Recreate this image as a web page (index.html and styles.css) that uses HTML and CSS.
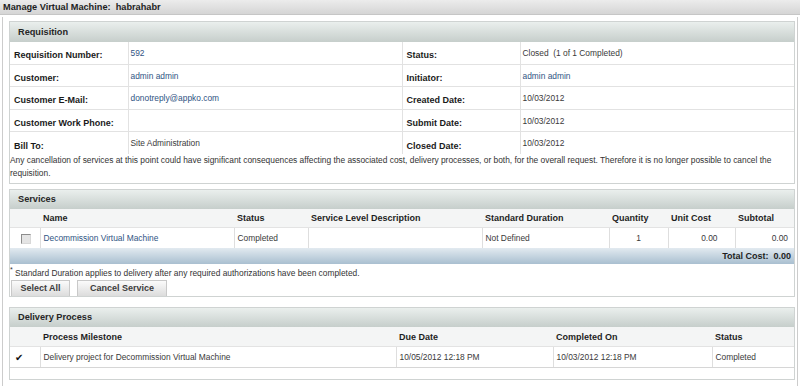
FILE: index.html
```html
<!DOCTYPE html>
<html lang="en">
<head>
    <meta charset="UTF-8">
    <title>Manage Virtual Machine</title>
    <link rel="stylesheet" href="styles.css">
</head>
<body>
    <div class="titlebar">Manage Virtual Machine:&nbsp; habrahabr</div>

    <div class="page">
        <!-- Requisition -->
        <div class="section requisition">
            <div class="section-head">Requisition</div>
            <table class="details">
                <colgroup>
                    <col class="c-label"><col class="c-value"><col class="c-label"><col>
                </colgroup>
                <tr>
                    <th>Requisition Number:</th><td><a href="#">592</a></td>
                    <th>Status:</th><td>Closed &nbsp;(1 of 1 Completed)</td>
                </tr>
                <tr>
                    <th>Customer:</th><td><a href="#">admin admin</a></td>
                    <th>Initiator:</th><td><a href="#">admin admin</a></td>
                </tr>
                <tr>
                    <th>Customer E-Mail:</th><td><a href="#">donotreply@appko.com</a></td>
                    <th>Created Date:</th><td>10/03/2012</td>
                </tr>
                <tr>
                    <th>Customer Work Phone:</th><td></td>
                    <th>Submit Date:</th><td>10/03/2012</td>
                </tr>
                <tr>
                    <th>Bill To:</th><td>Site Administration</td>
                    <th>Closed Date:</th><td>10/03/2012</td>
                </tr>
            </table>
            <p class="warning">Any cancellation of services at this point could have significant consequences affecting the associated cost, delivery processes, or both, for the overall request. Therefore it is no longer possible to cancel the requisition.</p>
        </div>

        <!-- Services -->
        <div class="section services">
            <div class="section-head">Services</div>
            <table class="grid">
                <colgroup>
                    <col class="s-check"><col class="s-name"><col class="s-status"><col class="s-sld">
                    <col class="s-dur"><col class="s-qty"><col class="s-unit"><col>
                </colgroup>
                <tr class="head">
                    <th></th><th>Name</th><th>Status</th><th>Service Level Description</th>
                    <th>Standard Duration</th><th>Quantity</th><th>Unit Cost</th><th>Subtotal</th>
                </tr>
                <tr class="row">
                    <td class="check"><span class="checkbox"></span></td>
                    <td><a href="#">Decommission Virtual Machine</a></td>
                    <td>Completed</td>
                    <td></td>
                    <td>Not Defined</td>
                    <td class="qty">1</td>
                    <td class="unit">0.00</td>
                    <td class="sub">0.00</td>
                </tr>
                <tr class="total">
                    <td colspan="8">Total Cost:&nbsp; 0.00</td>
                </tr>
            </table>
            <p class="footnote"><sup>*</sup> Standard Duration applies to delivery after any required authorizations have been completed.</p>
            <div class="buttons">
                <button class="btn select-all">Select All</button>
                <button class="btn cancel">Cancel Service</button>
            </div>
        </div>

        <!-- Delivery Process -->
        <div class="section delivery">
            <div class="section-head">Delivery Process</div>
            <table class="grid">
                <colgroup>
                    <col class="d-check"><col class="d-milestone"><col class="d-due"><col class="d-done"><col>
                </colgroup>
                <tr class="head">
                    <th></th><th>Process Milestone</th><th>Due Date</th><th>Completed On</th><th>Status</th>
                </tr>
                <tr class="row">
                    <td class="check"><span class="tick">&#10004;</span></td>
                    <td>Delivery project for Decommission Virtual Machine</td>
                    <td>10/05/2012 12:18 PM</td>
                    <td>10/03/2012 12:18 PM</td>
                    <td>Completed</td>
                </tr>
            </table>
            <div class="spacer"></div>
        </div>
    </div>
</body>
</html>
```

FILE: styles.css
```css
body {
    margin: 0;
    background-color: #ffffff;
    font-family: "Liberation Sans", Arial, sans-serif;
    font-size: 8.4px;
    color: #3a3a3a;
}

a {
    color: #2f5483;
    text-decoration: none;
}

.titlebar {
    height: 14px;
    line-height: 14px;
    padding-left: 3px;
    font-size: 9.2px;
    font-weight: bold;
    color: #1e1e1e;
    background: linear-gradient(#ececec, #d5d5d5);
    border-bottom: 1px solid #c6c6c6;
}

.page {
    margin: 2px 2px 0 2px;
    padding: 4px 2px 6px 6px;
    border-left: 1px solid #cccccc;
    border-right: 1px solid #cccccc;
}

.section {
    border: 1px solid #cfd3d2;
}

.requisition {
    margin-bottom: 5px;
}

.services {
    margin-bottom: 10px;
}

.section-head {
    height: 20px;
    line-height: 20px;
    padding-left: 8px;
    font-size: 9.2px;
    font-weight: bold;
    color: #262626;
    background: linear-gradient(#eaefed, #c6cecb);
}

.services .section-head,
.delivery .section-head {
    height: 19px;
    line-height: 19px;
}

table {
    width: 100%;
    border-collapse: collapse;
    table-layout: fixed;
}

/* requisition details */
.c-label { width: 118px; }
.c-value { width: 274px; }

.details tr {
    height: 22.4px;
}

.details th,
.details td {
    padding: 0;
    line-height: 10px;
    border-bottom: 1px solid #e2e2e2;
}

.details tr:last-child th,
.details tr:last-child td {
    border-bottom: none;
}

.details th {
    padding: 5px 0 0 4px;
    text-align: left;
    vertical-align: middle;
    font-size: 9px;
    font-weight: bold;
    color: #1a1a1a;
}

.details td {
    padding: 6px 0 0 2px;
    vertical-align: top;
    border-left: 1px solid #e2e2e2;
}

.details th:nth-child(3) {
    border-left: 1px solid #e2e2e2;
}

.warning {
    margin: 0;
    padding: 0 2px 3px 0;
    line-height: 13px;
    color: #333333;
}

/* grids */
.grid th,
.grid td {
    padding: 0 0 0 3px;
    text-align: left;
    white-space: nowrap;
}

.grid .head {
    height: 19px;
}

.grid .head th {
    font-size: 9px;
    font-weight: bold;
    color: #1e1e1e;
    background-color: #f4f5f5;
}

.grid .row {
    height: 20px;
}

.grid .row td {
    border-top: 1px solid #e3e3e3;
    border-left: 1px solid #dedede;
}

.grid .row td.check {
    border-left: none;
    text-align: center;
    padding: 0;
}

.s-check { width: 30px; }
.s-name { width: 194px; }
.s-status { width: 74px; }
.s-sld { width: 174px; }
.s-dur { width: 127px; }
.s-qty { width: 59px; }
.s-unit { width: 67px; }

.services .grid td.qty {
    text-align: center;
    padding: 0;
}

.services .grid td.unit {
    text-align: right;
    padding: 0 17px 0 0;
}

.services .grid td.sub {
    text-align: right;
    padding: 0 6px 0 0;
}

.checkbox {
    display: inline-block;
    width: 8px;
    height: 8px;
    margin-left: 2px;
    vertical-align: middle;
    background-color: #e4e4e4;
    border-top: 1px solid #8c8c8c;
    border-left: 1px solid #8c8c8c;
    border-right: 1px solid #d8d8d8;
    border-bottom: 1px solid #d8d8d8;
}

.grid .total {
    height: 16px;
}

.grid .total td {
    padding: 0 3px 0 0;
    text-align: right;
    font-size: 9px;
    font-weight: bold;
    color: #1e1e1e;
    background: linear-gradient(#e2eaf0, #a9bfd0);
}

.footnote {
    margin: 0;
    padding: 3px 0 0 0;
    height: 13px;
    line-height: 13px;
    color: #333333;
}

.footnote sup {
    font-size: 7px;
    line-height: 0;
}

.buttons {
    display: flex;
    gap: 7px;
    padding: 0 0 0 1px;
}

.btn {
    height: 16px;
    padding: 0;
    font-family: "Liberation Sans", Arial, sans-serif;
    font-size: 9px;
    font-weight: bold;
    color: #3c3c3c;
    background: linear-gradient(#fbfbfb, #dcdcdc);
    border: 1px solid #c9c9c9;
    border-bottom: none;
}

.select-all { width: 59px; }
.cancel { width: 90px; }

/* delivery */
.d-check { width: 30px; }
.d-milestone { width: 356px; }
.d-due { width: 157px; }
.d-done { width: 159px; }

.delivery .grid .head {
    height: 20px;
}

.delivery .grid .row {
    height: 21px;
}

.delivery .grid .row td {
    border-bottom: 1px solid #d6d6d6;
}

.delivery .grid .row td.check {
    text-align: left;
    padding-left: 5px;
}

.tick {
    font-family: "DejaVu Sans", sans-serif;
    font-size: 10px;
    color: #111111;
}

.spacer {
    height: 11px;
}
```
